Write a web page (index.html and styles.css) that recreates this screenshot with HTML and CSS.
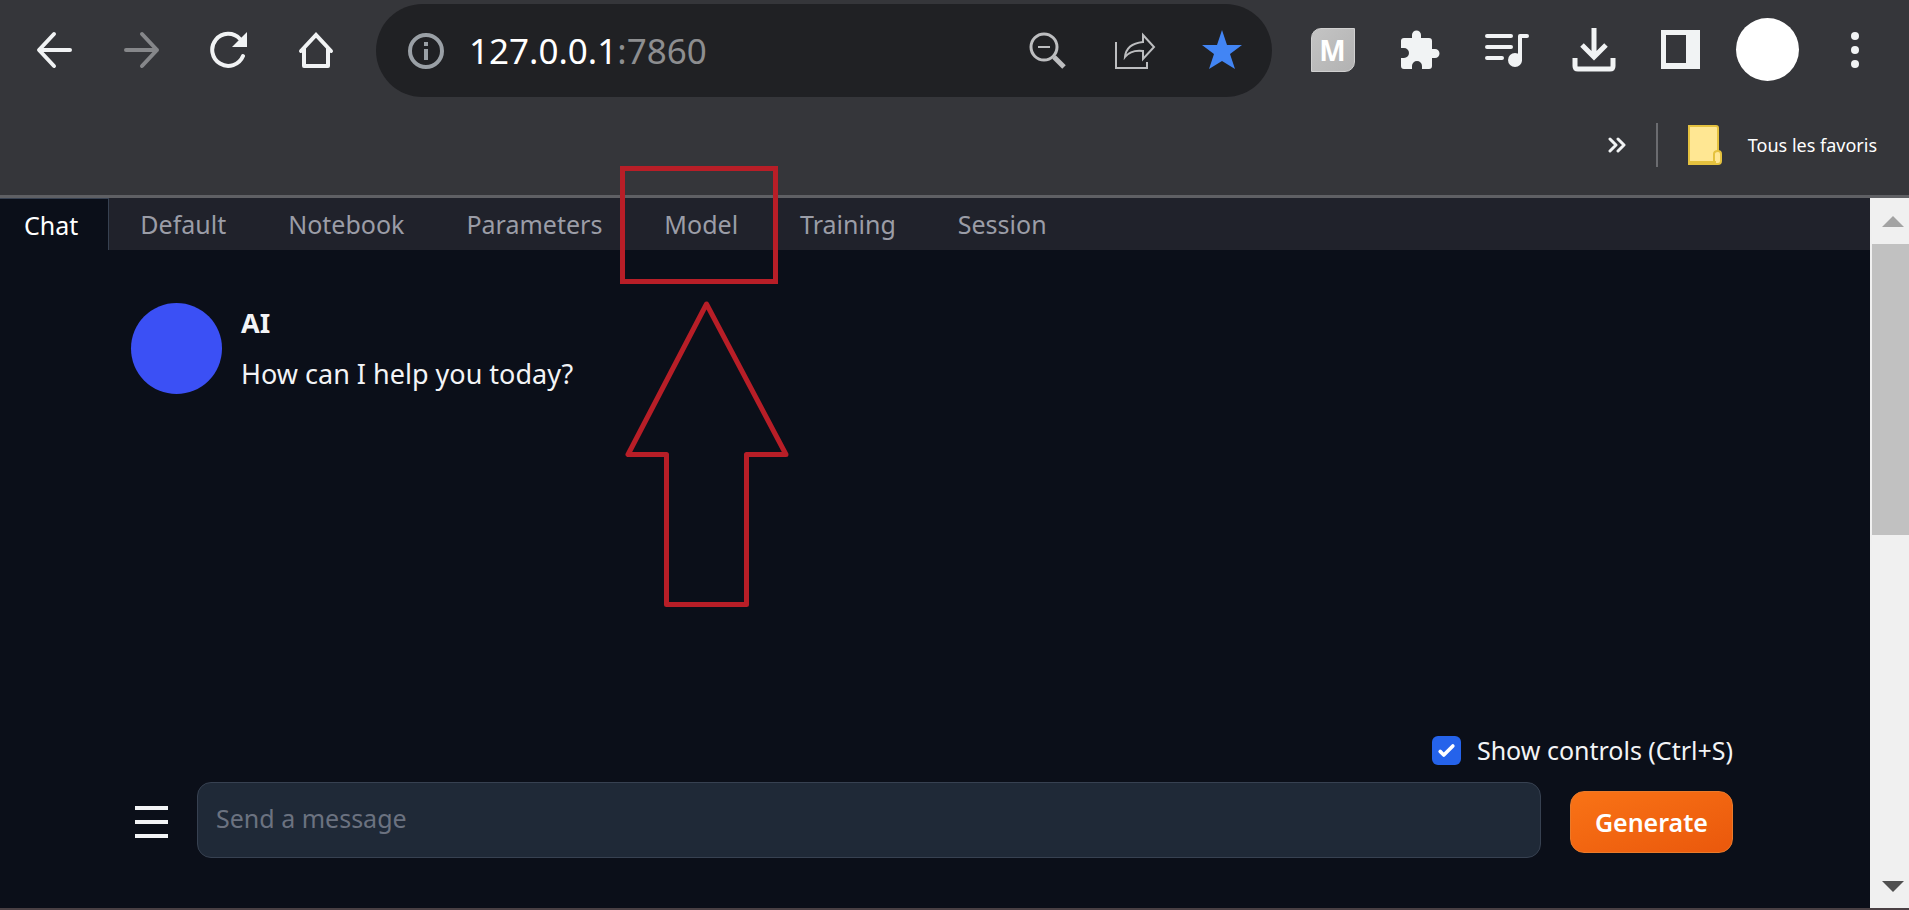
FILE: index.html
```html
<!DOCTYPE html>
<html lang="fr">
<head>
    <meta charset="UTF-8">
    <meta name="viewport" content="width=device-width, initial-scale=1.0">
    <title>Text generation web UI</title>
    <link rel="stylesheet" href="styles.css">
</head>
<body>
    <!-- browser toolbar -->
    <header class="browser">
        <div class="toolbar">
            <button class="tool" aria-label="Back">
                <svg width="38" height="38" viewBox="0 0 38 38" fill="none" stroke="#f1f3f4" stroke-width="4" stroke-linecap="round" stroke-linejoin="round"><path d="M34 19H4M18 3L3 19l15 16"/></svg>
            </button>
            <button class="tool" aria-label="Forward">
                <svg width="38" height="38" viewBox="0 0 38 38" fill="none" stroke="#86878a" stroke-width="4" stroke-linecap="round" stroke-linejoin="round"><path d="M3 19h31M19 3l15 16-15 16"/></svg>
            </button>
            <button class="tool" aria-label="Reload">
                <svg width="38" height="38" viewBox="0 0 38 38" fill="none"><path d="M33 25A16 16 0 1 1 30 8" stroke="#f1f3f4" stroke-width="4" stroke-linecap="round"/><path d="M37 1v15H22z" fill="#f1f3f4"/></svg>
            </button>
            <button class="tool" aria-label="Home">
                <svg width="38" height="38" viewBox="0 0 38 38" fill="none" stroke="#f1f3f4" stroke-width="4" stroke-linecap="round"><path d="M4 20L19 4l15 16"/><path d="M7 18v17h24V18" stroke-linejoin="round"/></svg>
            </button>

            <div class="omnibox">
                <button class="site-info" aria-label="Site information">
                    <svg width="38" height="38" viewBox="0 0 38 38"><circle cx="19" cy="19" r="16" fill="none" stroke="#9aa0a6" stroke-width="4"/><path d="M17 10h4v4h-4zM17 17h4v11h-4z" fill="#9aa0a6"/></svg>
                </button>
                <a class="url" href="#">127.0.0.1<span>:7860</span></a>
                <button class="tool" aria-label="Zoom">
                    <svg width="38" height="38" viewBox="0 0 38 38" fill="none" stroke="#bdbec0"><circle cx="15" cy="16" r="13" stroke-width="3"/><path d="M9 16h12" stroke-width="2"/><path d="M25 26l10 10" stroke-width="5"/></svg>
                </button>
                <button class="tool" aria-label="Share">
                    <svg width="42" height="40" viewBox="0 0 42 40" fill="none" stroke="#bdbec0" stroke-width="3"><path d="M2 12v26h31v-6" stroke-width="2"/><path d="M29 5l11 12-11 12v-8c-8-1-14 1-18 6 1-10 8-14 18-15z" stroke-width="2"/></svg>
                </button>
                <button class="tool" aria-label="Bookmark">
                    <svg width="42" height="40" viewBox="0 0 42 40"><path d="M21 0l5 15h15L29 24l5 15-13-8-13 8 5-15L1 15h15z" fill="#4285f4"/></svg>
                </button>
            </div>

            <button class="tool" aria-label="Extension M"><span class="ext">M</span></button>
            <button class="tool" aria-label="Extensions">
                <svg width="40" height="40" viewBox="0 0 40 40" fill="#f1f3f4"><path d="M4 8h8V5a4.500 4.500 0 0 1 9 0v3h8a3 3 0 0 1 3 3v8h3a4.500 4.500 0 0 1 0 9h-3v8a3 3 0 0 1-3 3h-7v-3a5 5 0 0 0-10 0v3H4a3 3 0 0 1-3-3v-8h3a5 5 0 0 0 0-10H1v-7a3 3 0 0 1 3-3z"/></svg>
            </button>
            <button class="tool" aria-label="Media">
                <svg width="44" height="36" viewBox="0 0 44 36"><path d="M2 4h24M2 15h24M2 26h15" stroke="#f1f3f4" stroke-width="4" stroke-linecap="round"/><circle cx="30" cy="28" r="7" fill="#f1f3f4"/><path d="M35 28V4h7" fill="none" stroke="#f1f3f4" stroke-width="4" stroke-linecap="round" stroke-linejoin="round"/></svg>
            </button>
            <button class="tool" aria-label="Downloads">
                <svg width="44" height="44" viewBox="0 0 44 44" fill="none" stroke="#f1f3f4" stroke-width="5"><path d="M22 0v29M10 17l12 12 12-12"/><path d="M3 30v8q0 3 3 3h32q3 0 3-3v-8"/></svg>
            </button>
            <button class="tool" aria-label="Side panel">
                <svg width="39" height="39" viewBox="0 0 39 39"><path d="M0 0h39v39H0zM5 5v28h20V5z" fill="#f1f3f4" fill-rule="evenodd"/></svg>
            </button>
            <button class="tool" aria-label="Profile"><span class="profile"></span></button>
            <button class="tool" aria-label="Menu">
                <svg width="10" height="38" viewBox="0 0 10 38" fill="#f1f3f4"><circle cx="5" cy="5" r="4"/><circle cx="5" cy="19" r="4"/><circle cx="5" cy="33" r="4"/></svg>
            </button>
        </div>

        <div class="bookmarks">
            <button class="more" aria-label="More bookmarks">
                <svg width="18" height="18" viewBox="0 0 18 18" fill="none" stroke="#f1f3f4" stroke-width="3" stroke-linecap="round" stroke-linejoin="round"><path d="M2 3l6 6-6 6M10 3l6 6-6 6"/></svg>
            </button>
            <span class="separator"></span>
            <a class="folder" href="#">
                <svg width="34" height="40" viewBox="0 0 34 40" stroke="#e5c23f" stroke-width="2"><path d="M1 1h27q2 0 2 2v23q3 0 3 3v7q0 3-3 3H1z" fill="#ffe793"/><path d="M30 26q-4 0-4 3v8M1 37h27" fill="none"/></svg>
                Tous les favoris
            </a>
        </div>
    </header>

    <div class="window">
        <main class="app">
            <nav class="tabs">
                <button class="tab active">Chat</button>
                <button class="tab">Default</button>
                <button class="tab">Notebook</button>
                <button class="tab">Parameters</button>
                <div class="highlight">
                    <button class="tab">Model</button>
                    <!-- red frame and arrow pointing at the tab -->
                    <svg class="marker" width="174" height="446" viewBox="0 0 174 446" fill="none" stroke="#b81e27" stroke-width="5">
                        <path d="M4.500 4.500h153v113h-153z"/>
                        <path d="M88.500 140L10 290.500h38.500V440.500h80V290.500H168z" stroke-linejoin="round"/>
                    </svg>
                </div>
                <button class="tab">Training</button>
                <button class="tab">Session</button>
            </nav>

            <section class="chat">
                <div class="message">
                    <div class="avatar"></div>
                    <div class="text">
                        <strong>AI</strong>
                        <p>How can I help you today?</p>
                    </div>
                </div>

                <form class="controls" onsubmit="return false">
                    <label class="show-controls">
                        <input type="checkbox" checked>
                        Show controls (Ctrl+S)
                    </label>
                    <div class="input-row">
                        <button type="button" class="menu" aria-label="Chat menu">
                            <span></span><span></span><span></span>
                        </button>
                        <input type="text" class="prompt" placeholder="Send a message" aria-label="Message">
                        <button type="submit" class="generate">Generate</button>
                    </div>
                </form>
            </section>
        </main>

        <div class="scrollbar">
            <svg width="22" height="11" viewBox="0 0 22 11"><path d="M0 11L11 0l11 11z" fill="#a3a3a3"/></svg>
            <div class="thumb"></div>
            <svg width="22" height="11" viewBox="0 0 22 11"><path d="M0 0h22L11 11z" fill="#505050"/></svg>
        </div>
    </div>
</body>
</html>
```
FILE: styles.css
```css
* {
    box-sizing: border-box;
}
body {
    margin: 0;
    min-height: 100vh;
    display: flex;
    flex-direction: column;
    background-color: #0b0f19;
    border-bottom: 2px solid #4a4044;
    color: #f3f4f6;
    font-family: "Noto Sans", sans-serif;
}
button {
    padding: 0;
    border: none;
    background: none;
    color: inherit;
    font-family: inherit;
    cursor: pointer;
}
a {
    color: inherit;
    text-decoration: none;
}

/* browser */
.browser {
    background-color: #35363a;
    border-bottom: 3px solid #5f6064;
}
.toolbar {
    display: flex;
    align-items: center;
    padding: 4px 11px 0;
}
.tool {
    width: 87px;
    flex-shrink: 0;
    display: flex;
    align-items: center;
    justify-content: center;
    padding-bottom: 2px;
}
.omnibox {
    flex: 1;
    height: 93px;
    margin: 0 17px;
    padding: 0 7px 0 31px;
    display: flex;
    align-items: center;
    background-color: #202124;
    border-radius: 47px;
}
.site-info {
    display: flex;
}
.url {
    flex: 1;
    margin-left: 24px;
    color: #fff;
    font-size: 35px;
    line-height: 48px;
}
.url span {
    color: #8d8e90;
}
.ext {
    width: 44px;
    height: 44px;
    border: 1px solid #d0d0d0;
    border-radius: 10px 0 10px 0;
    background: linear-gradient(135deg, #c4c4c4, #b2b2b2);
    color: #fff;
    font: bold 28px/42px "Noto Sans", sans-serif;
    text-align: center;
}
.profile {
    width: 63px;
    height: 63px;
    border-radius: 50%;
    background-color: #fff;
}
.bookmarks {
    height: 98px;
    padding: 0 32px 3px 0;
    display: flex;
    align-items: center;
    justify-content: flex-end;
    gap: 30px;
}
.more {
    display: flex;
}
.separator {
    width: 2px;
    height: 44px;
    background-color: #6b6c70;
}
.folder {
    display: flex;
    align-items: center;
    gap: 26px;
    color: #fff;
    font-size: 18px;
    line-height: 24px;
}

/* web ui */
.window {
    flex: 1;
    display: flex;
}
.app {
    flex: 1;
    display: flex;
    flex-direction: column;
}
.tabs {
    display: flex;
    background-color: #20222b;
}
.tab {
    height: 52px;
    padding: 0 31px;
    color: #9b9da7;
    font-size: 25px;
    line-height: 36px;
}
.tab.active {
    padding: 0 30px 0 24px;
    background-color: #0b0f19;
    border-top: 1px solid #374151;
    border-right: 1px solid #374151;
    color: #fff;
}
.highlight {
    position: relative;
}
.marker {
    position: absolute;
    top: -34px;
    left: -15px;
    z-index: 1;
    pointer-events: none;
}
.chat {
    flex: 1;
    display: flex;
    flex-direction: column;
    justify-content: space-between;
    padding: 53px 137px 50px 131px;
}
.message {
    display: flex;
    gap: 19px;
    font-size: 27px;
    line-height: 40px;
}
.avatar {
    width: 91px;
    height: 91px;
    border-radius: 50%;
    background-color: #3b50f5;
}
.text strong {
    display: block;
}
.text p {
    margin: 11px 0 0;
}
.show-controls {
    display: flex;
    align-items: center;
    justify-content: flex-end;
    gap: 16px;
    margin-bottom: 14px;
    font-size: 25px;
    line-height: 36px;
}
.show-controls input {
    appearance: none;
    width: 29px;
    height: 29px;
    margin: 0;
    border-radius: 6px;
    background: #2563eb url("data:image/svg+xml,%3Csvg viewBox='0 0 16 16' fill='white' xmlns='http://www.w3.org/2000/svg'%3E%3Cpath d='M12.207 4.793a1 1 0 010 1.414l-5 5a1 1 0 01-1.414 0l-2-2a1 1 0 011.414-1.414L6.500 9.086l4.293-4.293a1 1 0 011.414 0z'/%3E%3C/svg%3E") center / 100% no-repeat;
}
.input-row {
    display: flex;
    align-items: center;
}
.menu {
    width: 33px;
    margin: 4px 29px 0 4px;
    display: flex;
    flex-direction: column;
    gap: 10px;
}
.menu span {
    height: 4px;
    background-color: #f3f4f6;
}
.prompt {
    flex: 1;
    height: 76px;
    padding: 0 18px 4px;
    border: 1px solid #374151;
    border-radius: 14px;
    background-color: #1f2937;
    color: #f3f4f6;
    font-family: inherit;
    font-size: 25px;
}
.prompt::placeholder {
    color: #6b7280;
}
.generate {
    height: 62px;
    margin: 4px 0 0 29px;
    padding: 0 24px;
    border: 1px solid #ea7a2a;
    border-radius: 14px;
    background: linear-gradient(to bottom right, #f97316, #ea580c);
    color: #fff;
    font-size: 25px;
    font-weight: 600;
}

/* scrollbar */
.scrollbar {
    width: 39px;
    padding: 18px 5px 16px 12px;
    display: flex;
    flex-direction: column;
    background-color: #f0f0f0;
}
.thumb {
    height: 43%;
    margin: 17px -5px auto -10px;
    background-color: #c1c1c1;
}
```
